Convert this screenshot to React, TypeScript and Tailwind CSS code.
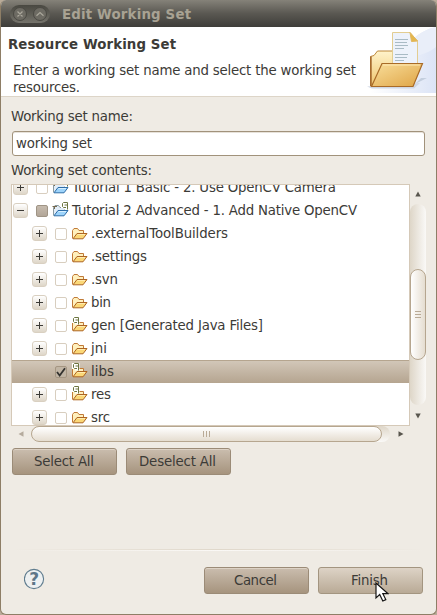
import React from "react";

type Row = {
  label: string;
  root?: boolean;
  open?: boolean;
  leaf?: boolean;
  tagged?: boolean;
  state?: "checked" | "mixed";
  width: string;
};

const rows: Row[] = [
  { label: "Tutorial 1 Basic - 2. Use OpenCV Camera", root: true, tagged: true, width: "264" },
  { label: "Tutorial 2 Advanced - 1. Add Native OpenCV", root: true, open: true, tagged: true, state: "mixed", width: "285" },
  { label: ".externalToolBuilders", width: "137" },
  { label: ".settings", width: "56" },
  { label: ".svn", width: "27" },
  { label: "bin", width: "20" },
  { label: "gen [Generated Java Files]", tagged: true, width: "172" },
  { label: "jni", width: "16" },
  { label: "libs", leaf: true, tagged: true, state: "checked", width: "23" },
  { label: "res", tagged: true, width: "20" },
  { label: "src", width: "19" },
];

function Expander({ open }: { open?: boolean }) {
  return (
    <div className="flex h-[15px] w-[15px] shrink-0 items-center justify-center rounded-[3px] border border-[#d9d0c1] bg-gradient-to-b from-white to-[#ded6c8]">
      <svg width="7" height="7" viewBox="0 0 7 7" shapeRendering="crispEdges">
        <path d={open ? "M0 3h7v1H0z" : "M0 3h7v1H0zM3 0h1v7H3z"} fill="#3c3b37" />
      </svg>
    </div>
  );
}

function Check({ state }: { state?: Row["state"] }) {
  const base = "relative h-3 w-3 shrink-0 rounded-[2px] border ";
  if (state === "mixed")
    return <div className={base + "border-[#9f9485] bg-gradient-to-b from-[#c6bbae] to-[#b2a698]"} />;
  if (state === "checked")
    return (
      <div className={base + "border-[#a59682] bg-[#c1b5a4]"}>
        <svg className="absolute -left-px -top-px" width="12" height="12" viewBox="0 0 12 12">
          <path d="M2 6l2.7 3.5L10 2.3" fill="none" stroke="#33322f" strokeWidth="1.8" />
        </svg>
      </div>
    );
  return <div className={base + "border-[#d8cebf] bg-white"} />;
}

function Folder({ root, tagged }: { root?: boolean; tagged?: boolean }) {
  return (
    <svg width="16" height="15" viewBox="0 0 16 15" className="block shrink-0 overflow-visible">
      <path
        d="M.5 12.5V4.5L2 2.5h3.5L7 4.5h4.5V7.5"
        fill={root ? "#e2edf8" : "#fff0bd"}
        stroke={root ? "#8a9aa0" : "#c07a38"}
      />
      <path
        d="M1 12.8L5 7.5h10L11 12.8z"
        fill={root ? "#9ed4fb" : "#fbd877"}
        stroke={root ? "#2f6ea8" : "#ad6523"}
        strokeLinejoin="round"
      />
      <path d="M5.5 8.5H13" stroke={root ? "#d8f0ff" : "#ffebae"} />
      {root && <path d="M-.5 3.5H4M1.5 4v2" stroke="#766a50" fill="none" />}
      {tagged && (
        <g transform={root ? "translate(8 -1)" : "translate(0 -1)"}>
          <path d="M0 0h7.5v7.5H3V6H0z" fill="#fff" />
          <path d="M5 5.5H2.5l-1-1v-3l1-1h4V7.5M3.5 3H6" fill="none" stroke="#6d7540" />
        </g>
      )}
    </svg>
  );
}

function Label({ children, width, bold, color = "#3c3b37" }: { children: string; width: string; bold?: boolean; color?: string }) {
  return (
    <svg width={width} height="18" className="block shrink-0 overflow-visible">
      <text
        x="0"
        y="14"
        textLength={width}
        lengthAdjust="spacing"
        fill={color}
        className={bold ? "text-[13.33px] font-bold" : "text-[13.33px]"}
      >
        {children}
      </text>
    </svg>
  );
}

function Button({ children, width, light }: { children: string; width: string; light?: boolean }) {
  return (
    <button
      className={
        "flex h-[27px] w-[105px] items-center justify-center rounded-[3px] border pb-px pr-[2px] shadow-[inset_0_1px_0_#ddd2c5] " +
        (light
          ? "border-[#a39580] bg-gradient-to-b from-[#ddd3c6] to-[#b9aa96]"
          : "border-[#9b8b77] bg-gradient-to-b from-[#cabdae] to-[#a6947e]")
      }
    >
      <Label width={width}>{children}</Label>
    </button>
  );
}

function Arrow({ dir }: { dir: "up" | "down" | "left" | "right" }) {
  const d = {
    up: "M3 .5L5.7 5.5H.3z",
    down: "M.3 .5H5.7L3 5.5z",
    left: "M.5 3L5.5 .3V5.7z",
    right: "M.5 .3L5.5 3L.5 5.7z",
  }[dir];
  return (
    <svg width="6" height="6" viewBox="0 0 6 6" className="shrink-0">
      <path d={d} fill={dir === "left" ? "#b5ab9d" : "#59564e"} />
    </svg>
  );
}

function FolderArt() {
  return (
    <svg width="70" height="66" viewBox="0 0 70 66" className="shrink-0">
      <defs>
        <linearGradient id="sky" x1="0" x2="1">
          <stop offset="0" stopColor="#fff" />
          <stop offset="1" stopColor="#dce4f6" />
        </linearGradient>
        <linearGradient id="front" x1="0" y1="0" x2="1" y2="1">
          <stop offset="0" stopColor="#f9df9c" />
          <stop offset="1" stopColor="#dfa445" />
        </linearGradient>
        <linearGradient id="back" x1="0" y1="0" x2="0" y2="1">
          <stop offset="0" stopColor="#fff3cb" />
          <stop offset="1" stopColor="#efc66e" />
        </linearGradient>
      </defs>
      <path d="M70 0C52 4 40 16 32 32L4 66H70z" fill="url(#sky)" />
      <path d="M70 0C61 2 54 6 48 11V28H54C61 26 66 23 70 20z" fill="#e9eef9" />
      <path d="M49 57L61 51L55 51z" fill="#c3cede" />
      <path d="M1 59.5L6 61.5H48L54 56z" fill="#d0d7e4" />
      <path d="M4.5 59V29.5L8 28.5L11.5 24H27V35H47V40L8 59z" fill="url(#back)" stroke="#bd8739" />
      <path d="M5 59V29.5" stroke="#9c5e25" strokeWidth="1.3" />
      <path d="M26.5 5.5H44L51.5 14V38H26.5z" fill="#edf2fb" stroke="#e3cd91" />
      <path d="M44 5.5L51.5 14L45.5 14.5z" fill="#e4b64d" stroke="#e2b75d" />
      <path d="M29 12.5H42M29 15.5H41M29 18.5H42M29 21.5H38M29 27.5H42M29 30.5H41M29 33.5H38" stroke="#a9bbc5" />
      <path d="M5.5 59.5L16 36.5H56.5L47 59.5z" fill="url(#front)" stroke="#a96b27" strokeWidth="1.2" />
      <path d="M17 38H54" stroke="#ffe9b4" />
    </svg>
  );
}

export default function App() {
  return (
    <div className="h-[615px] w-[437px] overflow-hidden bg-[#b9ab99] font-['DejaVu_Sans',sans-serif] text-[13.33px] text-[#3c3b37]">
      <div className="relative flex h-[615px] w-[437px] flex-col overflow-hidden rounded-[6px] border-b border-l border-r border-[#8e7e66] bg-[#efebe4]">
        <header className="flex h-[27px] shrink-0 items-center bg-gradient-to-b from-[#858279] via-[#5a5852] to-[#3e3d39] pl-[9px]">
          <div className="flex h-[18px] w-10 items-center justify-between rounded-full bg-gradient-to-b from-[#494841] to-[#75736b] px-[3px]">
            <svg width="34" height="16" viewBox="0 0 34 16">
              <circle cx="7" cy="8" r="6.5" fill="#6d6b63" stroke="#4a4943" />
              <circle cx="27" cy="8" r="6.5" fill="#6d6b63" stroke="#4a4943" />
              <path d="M4.5 5.5l5 5m0-5l-5 5M23.5 9.8L27 6.5l3.5 3.3" stroke="#aaa79b" strokeWidth="1.2" fill="none" />
            </svg>
          </div>
          <div className="ml-3 pt-px">
            <Label width="129" bold color="#a8a293">Edit Working Set</Label>
          </div>
        </header>

        <section className="flex h-[70px] shrink-0 justify-between border-b border-[#ddd5c8] bg-white">
          <div className="flex flex-col pl-[7px] pt-[8px]">
            <Label width="168" bold>Resource Working Set</Label>
            <div className="flex flex-col pl-[5px] pt-[8px]">
              <Label width="343">Enter a working set name and select the working set</Label>
              <div className="-mt-px">
                <Label width="67">resources.</Label>
              </div>
            </div>
          </div>
          <FolderArt />
        </section>

        <main className="flex flex-1 flex-col pl-2.5">
          <div className="pt-[10px]">
            <Label width="122">Working set name:</Label>
          </div>
          <div className="ml-px mt-[6px] flex h-[25px] w-[413px] items-center rounded-[3px] border border-[#a1927b] bg-white pb-[2px] pl-[3px] shadow-[inset_0_1px_0_#e7e2da]">
            <Label width="76">working set</Label>
          </div>
          <div className="mt-[5px] h-[23px]">
            <Label width="141">Working set contents:</Label>
          </div>

          <div className="flex h-[242px]">
            <div className="h-[242px] w-[399px] overflow-hidden border border-[#d5c9b8] bg-white">
              <div className="-mt-[9px] flex flex-col">
                {rows.map((r) => (
                  <div
                    key={r.label}
                    className={
                      "flex h-[23px] shrink-0 items-start pt-1 " +
                      (r.root ? "pl-px " : "pl-[20px] ") +
                      (r.leaf ? "bg-gradient-to-b from-[#d3c8ba] to-[#b5a590] shadow-[inset_0_1px_0_#b5a58f]" : "")
                    }
                  >
                    {r.leaf ? <div className="w-[15px]" /> : <Expander open={r.open} />}
                    <div className="ml-2 mt-[2px]">
                      <Check state={r.state} />
                    </div>
                    <div className="ml-[5px] w-[19px]">
                      <Folder root={r.root} tagged={r.tagged} />
                    </div>
                    <div className="-mt-[2px]">
                      <Label width={r.width}>{r.label}</Label>
                    </div>
                  </div>
                ))}
              </div>
            </div>
            <div className="flex w-4 flex-col items-center pt-[7px]">
              <Arrow dir="up" />
              <div className="mt-[7px] h-[201px] w-4 rounded-full bg-gradient-to-r from-[#ded6c8] to-[#faf9f7] pt-[65px]">
                <div className="flex h-[91px] w-4 flex-col items-center justify-center gap-[2px] rounded-full border border-[#b6a68f] bg-gradient-to-r from-white to-[#e5ddd0]">
                  <i className="h-px w-1.5 bg-[#b9aa96]" />
                  <i className="h-px w-1.5 bg-[#b9aa96]" />
                  <i className="h-px w-1.5 bg-[#b9aa96]" />
                </div>
              </div>
              <div className="mt-[8px]">
                <Arrow dir="down" />
              </div>
            </div>
          </div>

          <div className="flex h-4 items-center pl-[7px]">
            <Arrow dir="left" />
            <div className="ml-[7px] h-4 w-[359px] rounded-full bg-gradient-to-b from-[#ded6c8] to-[#faf9f7]">
              <div className="flex h-4 w-[351px] items-center justify-center gap-[2px] rounded-full border border-[#b6a68f] bg-gradient-to-b from-white to-[#e5ddd0]">
                <i className="h-1.5 w-px bg-[#b9aa96]" />
                <i className="h-1.5 w-px bg-[#b9aa96]" />
                <i className="h-1.5 w-px bg-[#b9aa96]" />
              </div>
            </div>
            <div className="ml-[8px]">
              <Arrow dir="right" />
            </div>
          </div>

          <div className="mt-[6px] flex gap-[9px] pl-px">
            <Button width="60">Select All</Button>
            <Button width="77">Deselect All</Button>
          </div>

          <div className="mr-[10px] mt-[74px] flex h-[2px] flex-col">
            <div className="h-px bg-gradient-to-r from-transparent via-[#e0d8cb] to-transparent" />
            <div className="h-px bg-gradient-to-r from-transparent via-[#faf8f5] to-transparent" />
          </div>
          <div className="mt-4 flex pl-[13px]">
            <svg width="22" height="22" viewBox="0 0 22 22" className="mt-px">
              <circle cx="10" cy="11" r="9.6" fill="#edf0f1" stroke="#607d8f" strokeWidth="1.1" />
              <text x="10.2" y="17" textAnchor="middle" fill="#5d7688" className="text-[17px] font-bold">?</text>
            </svg>
            <div className="ml-[158px] flex gap-[9px]">
              <Button width="43">Cancel</Button>
              <Button width="37" light>Finish</Button>
            </div>
          </div>
        </main>

        <svg className="absolute left-[374px] top-[582px]" width="14" height="21" viewBox="0 0 14 21">
          <path d="M1 1v15l3.7-3.4 3.1 6.4 3-1.4-3-6h5z" fill="#fff" stroke="#151515" strokeWidth="1.2" />
        </svg>
      </div>
    </div>
  );
}
